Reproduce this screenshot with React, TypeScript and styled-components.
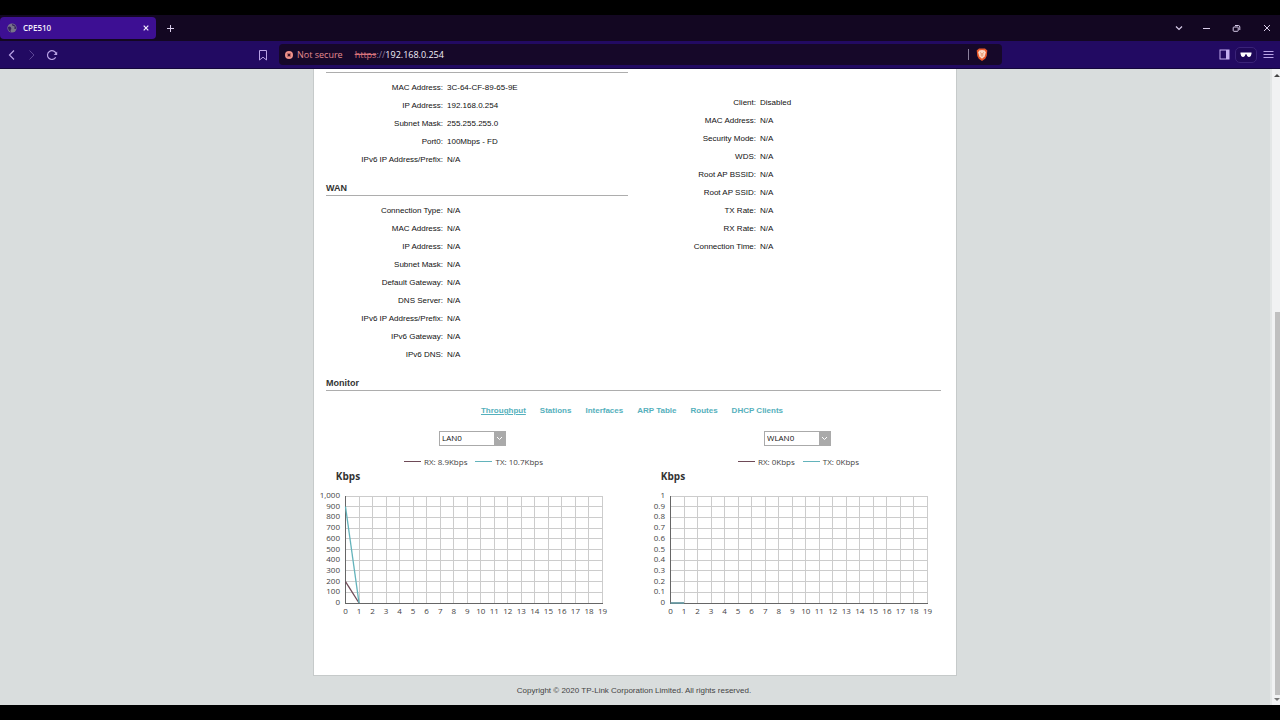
import React from "react";
import styled, { createGlobalStyle } from "styled-components";

const uiFont = `"Open Sans", "Noto Sans", sans-serif`;
const pageFont = `"Liberation Sans", Arial, sans-serif`;

const GlobalStyle = createGlobalStyle`
  *, *::before, *::after { box-sizing: border-box; }
  body { margin: 0; background: #000; }
  button, input, select { font: inherit; color: inherit; margin: 0; }
`;

const Screen = styled.div`
  display: flex;
  flex-direction: column;
  min-height: 100vh;
  padding: 15px 0;
  background: #000;
`;

const TabStrip = styled.header`
  display: flex;
  align-items: center;
  height: 26px;
  background: #130722;
  color: #d9cdea;
  font: 8px/12px ${uiFont};
`;

const BrowserTab = styled.div`
  display: flex;
  align-items: center;
  gap: 6px;
  width: 156px;
  height: 22px;
  padding: 0 5px 0 7px;
  border-radius: 4px;
  background: #3d0f93;
  color: #f4effb;
`;

const TabTitle = styled.span`
  flex: 1;
  font-weight: 600;
`;

const IconButton = styled.button<{ $width?: number; $dim?: boolean }>`
  display: flex;
  align-items: center;
  justify-content: center;
  width: ${(p) => p.$width ?? 20}px;
  height: 18px;
  padding: 0;
  border: 0;
  background: none;
  ${(p) => p.$dim && "color: #5d4795;"}
`;

const NewTab = styled.div`
  flex: 1;
  padding-left: 4px;
`;

const WindowControls = styled.div`
  display: flex;
`;

const Toolbar = styled.nav`
  display: flex;
  align-items: center;
  height: 28px;
  border-bottom: 1px solid #14073c;
  background: #220a62;
  color: #b9a3e6;
`;

const ToolbarSide = styled.div<{ $end?: boolean }>`
  display: flex;
  align-items: center;
  justify-content: ${(p) => (p.$end ? "flex-end" : "flex-start")};
  flex: 0 0 ${(p) => (p.$end ? 278 : 279)}px;
  padding-left: 2px;
`;

const BookmarkSlot = styled.div`
  display: flex;
  flex: 1;
  justify-content: flex-end;
  padding-right: 6px;
`;

const AddressBar = styled.div`
  display: flex;
  align-items: center;
  flex: 1;
  min-width: 0;
  height: 21px;
  padding: 0 14px 0 6px;
  border-radius: 4px;
  background: #160829;
  font: 9px/14px ${uiFont};
`;

const Warning = styled.span`
  display: flex;
  align-items: center;
  gap: 4px;
  margin-right: 12px;
  color: #e58b90;
`;

const Scheme = styled.span`
  color: #8d7a9f;
  s { color: #d8737c; }
`;

const AddressInput = styled.input`
  flex: 1;
  min-width: 0;
  padding: 0;
  border: 0;
  outline: 0;
  background: none;
  color: #f3eff8;
`;

const Shield = styled.div`
  display: flex;
  align-items: center;
  gap: 7px;
  &::before {
    content: "";
    width: 1px;
    height: 11px;
    background: #8b809c;
  }
`;

const PrivatePill = styled.button`
  display: flex;
  align-items: center;
  justify-content: center;
  width: 22px;
  height: 16px;
  padding: 0;
  border: 1px solid #3a2378;
  border-radius: 5px;
  background: #1f0958;
`;

const Viewport = styled.div`
  display: flex;
  flex: 1;
  background: #d9dddd;
`;

const Page = styled.div`
  display: flex;
  flex: 1;
  flex-direction: column;
  align-items: center;
  min-width: 0;
  font: 8px/18px ${pageFont};
  color: #111;
`;

const Card = styled.main`
  width: 100%;
  max-width: 644px;
  padding: 3px 0 55px;
  border: 1px solid #c6caca;
  border-top: 0;
  background: #fff;
`;

const StatusGrid = styled.div`
  display: grid;
  grid-template-columns: 1fr 1fr;
  gap: 11px;
  padding: 0 15px 0 12px;
`;

const Group = styled.section`
  padding: 6px 0 11px;
  border-top: 1px solid #adadad;
`;

const ClientGroup = styled.section`
  padding-top: 22px;
`;

const Heading = styled.h2`
  margin: 0;
  padding-top: 2px;
  font-size: 9px;
  line-height: 13px;
  font-weight: bold;
  color: #333;
`;

const Fields = styled.dl`
  margin: 0;
`;

const Field = styled.div`
  display: grid;
  grid-template-columns: 117px 1fr;
  column-gap: 4px;
  dt { text-align: right; }
  dd { margin: 0; }
`;

const MonitorHeader = styled.div`
  margin: 0 15px 0 12px;
  border-bottom: 1px solid #adadad;
`;

const MonitorTabs = styled.nav`
  display: flex;
  justify-content: center;
  gap: 14px;
  padding: 11px 6px 11px 0;
`;

const MonitorLink = styled.a<{ $active?: boolean }>`
  color: #55b0bc;
  font-weight: bold;
  text-decoration: ${(p) => (p.$active ? "underline" : "none")};
`;

const Charts = styled.div`
  display: grid;
  grid-template-columns: 1fr 1fr;
  gap: 8px;
`;

const ChartPanel = styled.section`
  display: flex;
  flex-direction: column;
  align-items: center;
  font-family: ${uiFont};
`;

const SelectBox = styled.label`
  display: flex;
  width: 67px;
  height: 15px;
  border: 1px solid #aaa;
  background: linear-gradient(to right, #fff 54px, #aaa 54px);
`;

const Select = styled.select`
  flex: 1;
  min-width: 0;
  height: 12px;
  padding: 0 2px;
  border: 0;
  outline: 0;
  appearance: none;
  background: none;
  color: #111;
  line-height: 12px;
`;

const SelectArrow = styled.svg`
  flex: none;
  align-self: center;
  margin-right: 2px;
  pointer-events: none;
`;

const Legend = styled.div`
  display: flex;
  gap: 8px;
  margin: 9px 0 1px;
  padding-left: 2px;
  line-height: 13px;
  color: #444;
`;

const LegendItem = styled.span<{ $color: string }>`
  display: flex;
  align-items: center;
  gap: 3px;
  &::before {
    content: "";
    width: 17px;
    height: 1px;
    background: ${(p) => p.$color};
  }
`;

const Plot = styled.svg`
  display: block;
  align-self: flex-start;
  font-family: ${uiFont};
  font-size: 8px;
  fill: #444;
`;

const Footer = styled.footer`
  padding: 6px 2px 5px 0;
  color: #444;
`;

const Scrollbar = styled.div`
  display: flex;
  flex-direction: column;
  align-items: center;
  width: 10px;
  padding: 4px 0 2px 2px;
  border-left: 2px solid #e3e6e6;
  background: #f1f2f3;
`;

const ScrollTrack = styled.div`
  display: flex;
  flex: 1;
  flex-direction: column;
  width: 100%;
  padding-left: 1px;
  &::before {
    content: "";
    flex: 234;
  }
`;

const ScrollThumb = styled.div`
  flex: 382;
  background: #c0c0c0;
`;

const RX = "#6e4a57";
const TX = "#63b3bb";

type Pair = [string, string];

const lan: Pair[] = [
  ["MAC Address:", "3C-64-CF-89-65-9E"],
  ["IP Address:", "192.168.0.254"],
  ["Subnet Mask:", "255.255.255.0"],
  ["Port0:", "100Mbps - FD"],
  ["IPv6 IP Address/Prefix:", "N/A"],
];

const wan: Pair[] = [
  "Connection Type:", "MAC Address:", "IP Address:", "Subnet Mask:", "Default Gateway:",
  "DNS Server:", "IPv6 IP Address/Prefix:", "IPv6 Gateway:", "IPv6 DNS:",
].map((label) => [label, "N/A"]);

const client: Pair[] = [
  ["Client:", "Disabled"],
  ...["MAC Address:", "Security Mode:", "WDS:", "Root AP BSSID:", "Root AP SSID:",
    "TX Rate:", "RX Rate:", "Connection Time:"].map((label): Pair => [label, "N/A"]),
];

const FieldList = ({ items }: { items: Pair[] }) => (
  <Fields>
    {items.map(([label, value]) => (
      <Field key={label}>
        <dt>{label}</dt>
        <dd>{value}</dd>
      </Field>
    ))}
  </Fields>
);

interface ThroughputProps {
  name: string;
  rx: string;
  tx: string;
  ticks: string[];
  rxLevel: number;
  txLevel: number;
}

const LEFT = 31.5;
const TOP = 27;
const BOTTOM = 134;
const STEP_X = 257 / 19;
const STEP_Y = (BOTTOM - TOP) / 10;

/* One interface's picker, legend and 20-sample line chart. Levels run from 0 to 1. */
const Throughput = ({ name, rx, tx, ticks, rxLevel, txLevel }: ThroughputProps) => {
  const y = (level: number) => BOTTOM - level * (BOTTOM - TOP);
  const line = (level: number) => `M${LEFT} ${y(level)}L${LEFT + STEP_X} ${BOTTOM}`;
  return (
    <ChartPanel>
      <SelectBox>
        <Select aria-label="Interface" defaultValue={name}>
          <option>{name}</option>
        </Select>
        <SelectArrow width="7" height="5" viewBox="0 0 7 5" fill="none" stroke="#fff">
          <path d="M1 1l2.5 2.5L6 1" />
        </SelectArrow>
      </SelectBox>
      <Legend>
        <LegendItem $color={RX}>RX: {rx}</LegendItem>
        <LegendItem $color={TX}>TX: {tx}</LegendItem>
      </Legend>
      <Plot width="317" height="151" viewBox="0 0 317 151">
        <text x="34" y="11" textAnchor="middle" fontSize="10" fontWeight="700" fill="#333">Kbps</text>
        <g stroke="#ccc" shapeRendering="crispEdges">
          {ticks.map((t, i) => (
            <line key={t} x1={LEFT} x2={LEFT + 257} y1={TOP + i * STEP_Y} y2={TOP + i * STEP_Y} />
          ))}
          {Array.from({ length: 20 }, (_, i) => (
            <line key={i} x1={LEFT + i * STEP_X} x2={LEFT + i * STEP_X} y1={TOP} y2={BOTTOM} />
          ))}
        </g>
        <path d={`M${LEFT} ${TOP}V${BOTTOM}H${LEFT + 257}`} fill="none" stroke="#666" shapeRendering="crispEdges" />
        <path d={line(rxLevel)} stroke={RX} fill="none" strokeWidth="1.3" />
        <path d={line(txLevel)} stroke={TX} fill="none" strokeWidth="1.3" />
        {ticks.map((t, i) => (
          <text key={t} x="26" y={TOP + 2 + i * STEP_Y} textAnchor="end">{t}</text>
        ))}
        {Array.from({ length: 20 }, (_, i) => (
          <text key={i} x={LEFT + i * STEP_X} y={BOTTOM + 11} textAnchor="middle">{i}</text>
        ))}
      </Plot>
    </ChartPanel>
  );
};

const lanTicks = ["1,000", "900", "800", "700", "600", "500", "400", "300", "200", "100", "0"];
const wlanTicks = ["1", "0.9", "0.8", "0.7", "0.6", "0.5", "0.4", "0.3", "0.2", "0.1", "0"];

const Stroke = ({ d, w = 12, h = 12, sw = 1 }: { d: string; w?: number; h?: number; sw?: number }) => (
  <svg width={w} height={h} viewBox={`0 0 ${w} ${h}`} fill="none" stroke="currentColor" strokeWidth={sw}>
    <path d={d} />
  </svg>
);

export default function App() {
  return (
    <Screen>
      <GlobalStyle />
      <TabStrip>
        <BrowserTab>
          <svg width="10" height="10" viewBox="0 0 10 10">
            <circle cx="5" cy="5" r="4.6" fill="#77738a" />
            <path d="M1 4q2-1 3 .5T3.5 7L4 9Q1 8 1 4M5 1q-.5 2 1.5 2T7 5.5L9 6Q9.5 2 5 1" fill="#35235e" />
          </svg>
          <TabTitle>CPE510</TabTitle>
          <IconButton $width={10} aria-label="Close tab"><Stroke w={8} h={8} sw={1.2} d="M1.7 1.7l4.600 4.600m0-4.600l-4.600 4.600" /></IconButton>
        </BrowserTab>
        <NewTab>
          <IconButton aria-label="New tab"><Stroke w={9} h={9} d="M4.5 1v7M1 4.5h7" /></IconButton>
        </NewTab>
        <WindowControls>
          <IconButton $width={28} aria-label="Search tabs"><Stroke w={8} h={6} sw={1.2} d="M1 1.5l3 3 3-3" /></IconButton>
          <IconButton $width={26} aria-label="Minimize"><Stroke w={7} h={3} d="M0 1.5h7" /></IconButton>
          <IconButton $width={35} aria-label="Restore"><Stroke w={9} h={9} d="M2 3h3.500q.7 0 .7.7V6.500q0 .8-.8.8H2q-.8 0-.8-.8V3.800Q1.200 3 2 3M3 1.500h3.300q1.500 0 1.500 1.500v3" /></IconButton>
          <IconButton $width={26} aria-label="Close"><Stroke w={8} h={8} d="M1 1l6 6m0-6l-6 6" /></IconButton>
        </WindowControls>
      </TabStrip>
      <Toolbar>
        <ToolbarSide>
          <IconButton aria-label="Back"><Stroke sw={1.2} d="M8 1.5L3.5 6l4.500 4.500" /></IconButton>
          <IconButton aria-label="Forward" $dim><Stroke d="M3.5 1.5L8 6 3.500 10.500" /></IconButton>
          <IconButton aria-label="Reload">
            <svg width="12" height="12" viewBox="0 0 12 12" fill="none" stroke="currentColor" strokeWidth="1.2">
              <path d="M9.7 8.3A4.4 4.4 0 1 1 10 4.5" />
              <path d="M11.2 2.5V6H7.7z" fill="currentColor" stroke="none" />
            </svg>
          </IconButton>
          <BookmarkSlot>
            <IconButton aria-label="Bookmark"><Stroke d="M2.5 1.5h7v9.500L6 8.200 2.500 11z" /></IconButton>
          </BookmarkSlot>
        </ToolbarSide>
        <AddressBar>
          <Warning>
            <svg width="8" height="8" viewBox="0 0 8 8">
              <circle cx="4" cy="4" r="4" fill="#ef9089" />
              <path d="M2.6 2.6l2.8 2.8m0-2.8L2.6 5.4" stroke="#3a1024" strokeWidth="1.2" />
            </svg>
            Not secure
          </Warning>
          <Scheme><s>https</s>://</Scheme>
          <AddressInput aria-label="Address" defaultValue="192.168.0.254" />
          <Shield>
            <svg width="12" height="13" viewBox="0 0 12 13">
              <path d="M3 .5h6l2.3 2-.6 5.5-1.5 2.8L6 13l-3.2-2.2L1.3 8 .7 2.5z" fill="#e8582a" />
              <path d="M3.2 2.5L6 2l2.8.5 1 2-1.200 4L6 10.800 3.400 8.500l-1.200-4z" fill="#fbd9c6" />
              <path d="M4 4.5l1.500 1L5 7.500l1 .8 1-.8-.5-2 1.500-1" fill="none" stroke="#d8804f" strokeWidth=".7" />
            </svg>
          </Shield>
        </AddressBar>
        <ToolbarSide $end>
          <IconButton aria-label="Sidebar" $width={22}>
            <svg width="11" height="11" viewBox="0 0 11 11">
              <rect x="1" y="1" width="9" height="9" fill="none" stroke="#c3aef0" />
              <rect x="7" y="1" width="3" height="9" fill="#c3aef0" />
            </svg>
          </IconButton>
          <PrivatePill aria-label="Private window">
            <svg width="12" height="6" viewBox="0 0 12 6">
              <path d="M.5.5h11v1.300L10.800 4Q9 5.800 7.200 4L6.500 2.200h-1L4.800 4Q3 5.800 1.200 4L.5 1.800z" fill="#fff" />
            </svg>
          </PrivatePill>
          <IconButton aria-label="Menu" $width={23}><Stroke w={11} h={9} d="M.5 1.5h10M.5 4.5h10M.5 7.5h10" /></IconButton>
        </ToolbarSide>
      </Toolbar>
      <Viewport>
        <Page>
          <Card>
            <StatusGrid>
              <div>
                <Group aria-label="LAN"><FieldList items={lan} /></Group>
                <Heading>WAN</Heading>
                <Group><FieldList items={wan} /></Group>
              </div>
              <ClientGroup><FieldList items={client} /></ClientGroup>
            </StatusGrid>
            <MonitorHeader><Heading>Monitor</Heading></MonitorHeader>
            <MonitorTabs>
              {["Throughput", "Stations", "Interfaces", "ARP Table", "Routes", "DHCP Clients"].map((t, i) => (
                <MonitorLink key={t} href="#" $active={i === 0}>{t}</MonitorLink>
              ))}
            </MonitorTabs>
            <Charts>
              <Throughput name="LAN0" rx="8.9Kbps" tx="10.7Kbps" ticks={lanTicks} rxLevel={0.2} txLevel={0.9} />
              <Throughput name="WLAN0" rx="0Kbps" tx="0Kbps" ticks={wlanTicks} rxLevel={0} txLevel={0} />
            </Charts>
          </Card>
          <Footer>Copyright © 2020 TP-Link Corporation Limited. All rights reserved.</Footer>
        </Page>
        <Scrollbar aria-hidden>
          <svg width="6" height="5" viewBox="0 0 6 5"><path d="M0 4l3-3 3 3z" fill="#444" /></svg>
          <ScrollTrack><ScrollThumb /></ScrollTrack>
          <svg width="6" height="8" viewBox="0 0 6 8"><path d="M0 3l3 3 3-3z" fill="#777" /></svg>
        </Scrollbar>
      </Viewport>
    </Screen>
  );
}
